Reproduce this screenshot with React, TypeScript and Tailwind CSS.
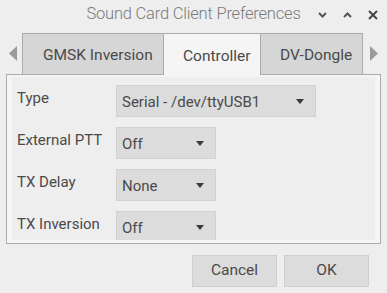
import React from "react";

const rows = [
  { label: "Type", value: "Serial - /dev/ttyUSB1", wide: true },
  { label: "External PTT", value: "Off" },
  { label: "TX Delay", value: "None" },
  { label: "TX Inversion", value: "Off" },
];

function Caret() {
  return (
    <svg width="8" height="5" viewBox="0 0 8 5" className="shrink-0">
      <path d="M0 0 L8 0 L4 5 Z" fill="#3a3a3a" />
    </svg>
  );
}

function Combo({ value, wide }: { value: string; wide?: boolean }) {
  return (
    <div
      className={`flex items-center justify-between h-[32px] pl-[5px] pr-[11px] bg-[#dcdcdc] border border-[#d2d2d2] ${
        wide ? "w-[200px]" : "w-[100px]"
      }`}
    >
      <span className="pt-[2px]">{value}</span>
      <Caret />
    </div>
  );
}

export default function App() {
  return (
    <div
      className="w-[387px] h-[293px] bg-[#eeeeee] flex flex-col overflow-hidden text-[#4a4a4a]"
      style={{ fontFamily: "Roboto, 'Liberation Sans', sans-serif" }}
    >
      {/* Title bar */}
      <div className="h-[33px] grid grid-cols-[1fr_auto_1fr] items-center">
        <div />
        <p className="text-[16.5px] font-light text-[#7a7a7a] tracking-[-0.2px] pb-[4px]">
          Sound Card Client Preferences
        </p>
        <div className="flex justify-end items-center gap-[16px] pr-[9px] pb-[4px]">
          <svg width="9" height="6" viewBox="0 0 9 6">
            <path d="M1 1 L4.5 4.5 L8 1" stroke="#555" strokeWidth="2" fill="none" />
          </svg>
          <svg width="9" height="6" viewBox="0 0 9 6">
            <path d="M1 5 L4.5 1.5 L8 5" stroke="#555" strokeWidth="2" fill="none" />
          </svg>
          <svg width="10" height="10" viewBox="0 0 10 10">
            <path d="M1 1 L9 9 M9 1 L1 9" stroke="#444" strokeWidth="2" />
          </svg>
        </div>
      </div>

      {/* Tabs */}
      <div className="h-[41px] flex text-[15.5px] text-[#4a4a4a]">
        <div className="w-[22px] flex items-center justify-center pl-[3px]">
          <svg width="8" height="15" viewBox="0 0 8 15">
            <path d="M8 0 L0 7.5 L8 15 Z" fill="#9a9a9a" />
          </svg>
        </div>
        <div className="w-[142px] flex items-center pl-[20px] pt-[4px] bg-[#d6d6d6] border border-b-0 border-[#ababab]">
          GMSK Inversion
        </div>
        <div className="w-[96px] h-[42px] flex items-center pl-[19px] pt-[4px] bg-[#f5f5f5] border-t border-[#ababab] relative z-10">
          Controller
        </div>
        <div className="w-[103px] flex items-center pl-[19px] pt-[4px] bg-[#d6d6d6] border border-b-0 border-[#ababab]">
          DV-Dongle
        </div>
        <div className="flex-1 flex items-center pl-[7px]">
          <svg width="8" height="15" viewBox="0 0 8 15">
            <path d="M0 0 L8 7.5 L0 15 Z" fill="#9a9a9a" />
          </svg>
        </div>
      </div>

      {/* Notebook page */}
      <div className="mx-[6px] h-[170px] border border-[#ababab] bg-[#f5f5f5] px-[5px] pt-[2px] pb-[3px]">
        <div className="h-full bg-[#eeeeee] overflow-hidden pt-[8px] pl-[5px] flex flex-col gap-[10px] text-[15px]">
          {rows.map((r) => (
            <div key={r.label} className="flex items-start">
              <span className="w-[99px] pt-[2px]">{r.label}</span>
              <Combo value={r.value} wide={r.wide} />
            </div>
          ))}
        </div>
      </div>

      {/* Buttons */}
      <div className="flex justify-end gap-[7px] pr-[18px] pt-[11px]">
        <button className="w-[85px] h-[32px] bg-[#dcdcdc] border border-[#cfcfcf] text-[15.5px] text-[#4a4a4a]">
          Cancel
        </button>
        <button className="w-[85px] h-[32px] bg-[#dcdcdc] border border-[#cfcfcf] text-[15.5px] text-[#4a4a4a]">
          OK
        </button>
      </div>
    </div>
  );
}
